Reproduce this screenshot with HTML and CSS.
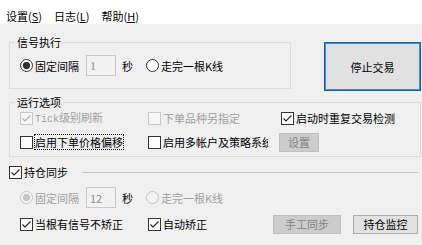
FILE: index.html
```html
<!DOCTYPE html>
<html>
<head>
<meta charset="utf-8">
<title>交易控制</title>
<link rel="stylesheet" href="styles.css">
</head>
<body>
<div class="menubar">
	<span class="menu-item">设置(<u>S</u>)</span>
	<span class="menu-item">日志(<u>L</u>)</span>
	<span class="menu-item">帮助(<u>H</u>)</span>
</div>

<div class="main">
	<div class="top-row">
		<fieldset class="group group-signal">
			<legend>信号执行</legend>
			<div class="group-body signal-body">
				<div class="row row-input">
					<span class="radio checked"></span>
					<span class="text">固定间隔</span>
					<span class="num-box serif">1</span>
					<span class="unit">秒</span>
					<span class="radio radio-gap"></span>
					<span class="text">走完一根K线</span>
				</div>
			</div>
		</fieldset>
		<button type="button" class="stop-btn">停止交易</button>
	</div>

	<fieldset class="group group-run">
		<legend>运行选项</legend>
		<div class="group-body run-body">
			<div class="row row-check">
				<span class="col-a">
					<span class="check disabled"><svg viewBox="0 0 11 11" width="11" height="11"><path d="M1.5 5.5 L4 8 L9.5 2.5" /></svg></span>
					<span class="text muted"><span class="mono">Tick</span>级别刷新</span>
				</span>
				<span class="col-b">
					<span class="check disabled"></span>
					<span class="text muted">下单品种另指定</span>
				</span>
				<span class="col-c">
					<span class="check"><svg viewBox="0 0 11 11" width="11" height="11"><path d="M1.5 5.5 L4 8 L9.5 2.5" /></svg></span>
					<span class="text">启动时重复交易检测</span>
				</span>
			</div>
			<div class="row row-btn">
				<span class="col-a">
					<span class="check"></span>
					<span class="text focus">启用下单价格偏移</span>
				</span>
				<span class="col-b clip">
					<span class="check"></span>
					<span class="text">启用多帐户及策略系统</span>
				</span>
				<button type="button" class="btn disabled small">设置</button>
			</div>
		</div>
	</fieldset>

	<div class="sync">
		<div class="sync-head">
			<span class="check"><svg viewBox="0 0 11 11" width="11" height="11"><path d="M1.5 5.5 L4 8 L9.5 2.5" /></svg></span>
			<span class="text">持仓同步</span>
			<span class="rule"></span>
		</div>
		<div class="sync-body">
			<div class="row row-input">
				<span class="radio checked disabled"></span>
				<span class="text muted">固定间隔</span>
				<span class="num-box">12</span>
				<span class="unit">秒</span>
				<span class="radio disabled radio-gap"></span>
				<span class="text muted">走完一根K线</span>
			</div>
			<div class="row row-btn">
				<span class="col-a">
					<span class="check"><svg viewBox="0 0 11 11" width="11" height="11"><path d="M1.5 5.5 L4 8 L9.5 2.5" /></svg></span>
					<span class="text">当根有信号不矫正</span>
				</span>
				<span class="col-b sync-col">
					<span class="check"><svg viewBox="0 0 11 11" width="11" height="11"><path d="M1.5 5.5 L4 8 L9.5 2.5" /></svg></span>
					<span class="text">自动矫正</span>
				</span>
				<button type="button" class="btn disabled manual">手工同步</button>
				<button type="button" class="btn monitor">持仓监控</button>
			</div>
		</div>
	</div>
</div>
</body>
</html>
```

FILE: styles.css
```css
body{
	margin:0;
	width:422px;
	height:245px;
	overflow:hidden;
	background:#f0f0f0;
	font-family:"Noto Sans CJK SC","Microsoft YaHei",sans-serif;
	font-size:11px;
	line-height:14px;
	color:#000;
}
button{
	font-family:inherit;
	font-size:11px;
	line-height:14px;
	padding:0;
	color:#000;
}

/* menu */
.menubar{
	display:flex;
	height:24px;
	box-sizing:border-box;
	padding-top:9px;
	background:#fff;
}
.menu-item{
	padding:0 6px;
}
.menu-item u{
	text-underline-offset:1px;
}

.main{
	padding:11px 0 0 9px;
}
.top-row{
	display:flex;
	align-items:flex-start;
}

/* group boxes */
.group{
	margin:0;
	padding:0;
	min-width:0;
	box-sizing:border-box;
	border:1px solid #dcdcdc;
}
.group legend{
	margin-left:5px;
	padding:0 2px;
	line-height:14px;
}
.group-signal{
	width:282px;
}
.signal-body{
	padding:6px 0 12px 10px;
}
.group-run{
	width:412px;
	margin-top:4px;
}
.run-body{
	padding:1px 0 4px 10px;
}

.row{
	display:flex;
	align-items:center;
	white-space:nowrap;
}
.row-input{
	height:21px;
}
.row-check{
	height:16px;
}
.row-btn{
	height:20px;
	margin-top:6px;
}
.col-a,.col-b,.col-c{
	display:flex;
	align-items:center;
	flex:none;
}
.col-a{
	width:128px;
}
.col-b{
	width:133px;
}
.col-b.clip{
	width:120px;
	overflow:hidden;
}
.col-b.sync-col{
	width:125px;
}

.text.muted{
	color:#a0a0a0;
}
.mono{
	font-family:"Liberation Mono",monospace;
	font-size:10px;
}
.text.focus{
	outline:1px dotted #000;
}

/* radio and check */
.radio{
	flex:none;
	width:13px;
	height:13px;
	box-sizing:border-box;
	border:1px solid #333;
	border-radius:50%;
	background:#fff;
	margin-right:2px;
}
.radio.checked{
	background:radial-gradient(circle, #333 0 3.4px, #fff 3.9px);
}
.radio.disabled{
	border-color:#c4c4c4;
	background:#f4f4f4;
}
.radio.checked.disabled{
	background:radial-gradient(circle, #c4c4c4 0 3.4px, #f4f4f4 3.9px);
}
.radio-gap{
	margin-left:13px;
}
.check{
	flex:none;
	display:flex;
	align-items:center;
	justify-content:center;
	width:13px;
	height:13px;
	box-sizing:border-box;
	border:1px solid #333;
	background:#fff;
	margin-right:2px;
}
.check svg path{
	fill:none;
	stroke:#222;
	stroke-width:1.1;
}
.check.disabled{
	border-color:#c8c8c8;
	background:#f6f6f6;
}
.check.disabled svg path{
	stroke:#b0b0b0;
}

.num-box{
	box-sizing:border-box;
	width:30px;
	height:21px;
	margin-left:7px;
	padding:3px 0 0 3px;
	border:1px solid #c8c8c8;
	background:#f2f2f2;
	color:#8c8c8c;
}
.num-box.serif{
	font-family:"Liberation Serif",serif;
	font-size:12px;
}
.unit{
	margin-left:6px;
}

/* buttons */
.stop-btn{
	width:97px;
	height:49px;
	margin:7px 0 0 33px;
	border:1px solid #1a5f9c;
	box-shadow:inset 0 0 0 1px #3a8fd8;
	background:#e1e1e1;
}
.btn{
	height:19px;
	box-sizing:border-box;
	border:1px solid #adadad;
	background:#e1e1e1;
}
.btn.disabled{
	border-color:#bfbfbf;
	background:#cccccc;
	color:#838383;
}
.btn.small{
	width:40px;
	margin-left:11px;
}
.btn.manual{
	width:68px;
}
.btn.monitor{
	width:65px;
	margin-left:12px;
}

/* sync section */
.sync-head{
	display:flex;
	align-items:center;
	height:14px;
	margin-top:8px;
	padding-right:4px;
}
.sync-head .rule{
	flex:1;
	margin-left:14px;
	border-top:1px solid #c8c8c8;
}
.sync-body{
	padding-left:11px;
}
.sync-body .row-input{
	margin-top:8px;
}
```
